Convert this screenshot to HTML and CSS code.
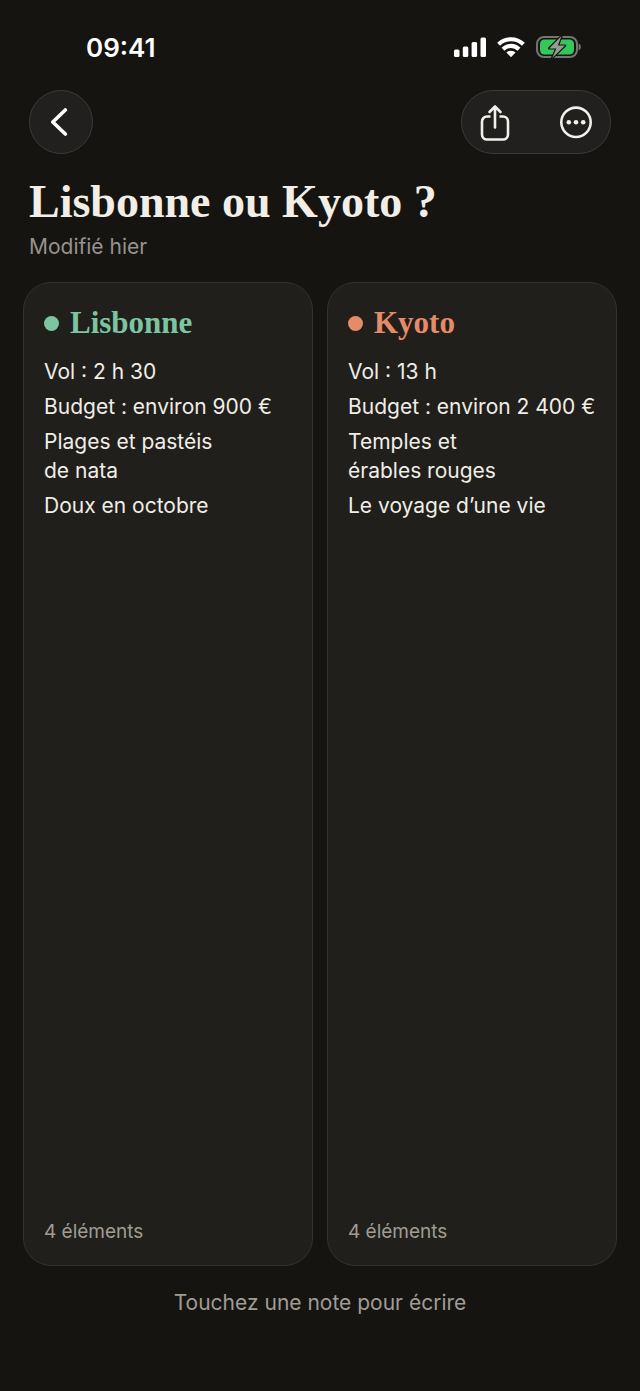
FILE: index.html
```html
<!DOCTYPE html>
<html lang="fr">
<head>
<meta charset="utf-8">
<meta name="viewport" content="width=device-width, initial-scale=1">
<title>Lisbonne ou Kyoto ?</title>
<link rel="stylesheet" href="styles.css">
</head>
<body>
<div class="screen">
  <div class="status">
    <time class="clock">09:41</time>
    <div class="indicators">
      <svg width="32" height="20" viewBox="0 0 32 20" fill="#fff" aria-hidden="true">
        <rect x="0" y="12.5" width="5.5" height="7.5" rx="1.5"/>
        <rect x="8.8" y="9.5" width="5.5" height="10.5" rx="1.5"/>
        <rect x="17.6" y="5" width="5.5" height="15" rx="1.5"/>
        <rect x="26.5" y="0.5" width="5.5" height="19.5" rx="1.5"/>
      </svg>
      <svg width="28" height="20" viewBox="0 0 28 20" fill="none" stroke="#fff" stroke-width="4.2" aria-hidden="true">
        <path d="M1.6 7.3a17.7 17.7 0 0 1 24.8 0"/>
        <path d="M6 12.2a11.5 11.5 0 0 1 16 0"/>
        <path d="M14 20.2l-4.6-4.6a6.4 6.4 0 0 1 9.2 0z" fill="#fff" stroke="none"/>
      </svg>
      <svg width="46" height="24" viewBox="0 0 46 24" aria-hidden="true">
        <rect x="1" y="2" width="40" height="20" rx="7" fill="none" stroke="#747472" stroke-width="2"/>
        <path d="M42.6 8.6c3 1 3 5.8 0 6.8z" fill="#747472"/>
        <rect x="4" y="4.5" width="34" height="15" rx="4.5" fill="#34c759"/>
        <path d="M25.5 1L13.2 13.4h7.2L16.2 23 29 10.6h-7.2z" fill="#999996" stroke="#151411" stroke-width="2.4" stroke-linejoin="round" paint-order="stroke"/>
      </svg>
    </div>
  </div>

  <header class="toolbar">
    <button class="glass back" type="button" aria-label="Retour">
      <svg width="20" height="30" viewBox="0 0 20 30" fill="none" stroke="#fff" stroke-width="3.6" stroke-linecap="round" stroke-linejoin="round" aria-hidden="true"><path d="M14.3 3L1.8 15l12.5 12"/></svg>
    </button>
    <div class="glass actions">
      <button class="action" type="button" aria-label="Partager">
        <svg width="32" height="38" viewBox="0 0 32 38" fill="none" stroke="#f2f0ea" stroke-width="2.6" stroke-linecap="round" stroke-linejoin="round" aria-hidden="true">
          <path d="M11.5 13.5H8a5 5 0 0 0-5 5v13a5 5 0 0 0 5 5h16a5 5 0 0 0 5-5v-13a5 5 0 0 0-5-5h-3.5" stroke-linecap="butt"/>
          <path d="M16 24.5V3.5M10.5 9L16 3.5 21.500 9"/>
        </svg>
      </button>
      <button class="action" type="button" aria-label="Plus d’options">
        <svg width="34" height="34" viewBox="0 0 34 34" fill="#f2f0ea" aria-hidden="true">
          <circle cx="17" cy="17.300" r="14.7" fill="none" stroke="#f2f0ea" stroke-width="2.6"/>
          <circle cx="9.8" cy="17.300" r="2.3"/><circle cx="17" cy="17.300" r="2.3"/><circle cx="24.2" cy="17.300" r="2.3"/>
        </svg>
      </button>
    </div>
  </header>

  <main class="content">
    <div class="heading">
      <h1 class="title">Lisbonne ou Kyoto ?</h1>
      <p class="modified">Modifié hier</p>
    </div>
    <div class="notes">
      <article class="note">
        <h2 class="note-title green">Lisbonne</h2>
        <ul class="items">
          <li>Vol : 2 h 30</li>
          <li>Budget : environ 900&nbsp;€</li>
          <li>Plages et pastéis<br>de nata</li>
          <li>Doux en octobre</li>
        </ul>
        <p class="count">4 éléments</p>
      </article>
      <article class="note">
        <h2 class="note-title orange">Kyoto</h2>
        <ul class="items">
          <li>Vol : 13 h</li>
          <li>Budget : environ 2 400&nbsp;€</li>
          <li>Temples et<br>érables rouges</li>
          <li>Le voyage d’une vie</li>
        </ul>
        <p class="count">4 éléments</p>
      </article>
    </div>
  </main>
  <footer class="hint">Touchez une note pour écrire</footer>
</div>
</body>
</html>
```
FILE: styles.css
```css
* {
  box-sizing: border-box;
}

body {
  margin: 0;
  background: #151411;
  color: #f0eee6;
  font-family: Inter, "Liberation Sans", sans-serif;
  font-size: 21px;
  line-height: 29px;
}

h1, h2, p, ul {
  margin: 0;
  padding: 0;
}

button {
  padding: 0;
  border: 0;
  background: none;
  cursor: pointer;
}

svg {
  display: block;
}

.screen {
  display: flex;
  flex-direction: column;
  min-height: 100vh;
}

.status {
  display: flex;
  align-items: center;
  justify-content: space-between;
  height: 90px;
  padding: 4px 58px 0 86px;
}

.clock {
  color: #fff;
  font-size: 26px;
  font-weight: 600;
}

.indicators {
  display: flex;
  align-items: center;
  gap: 11px;
}

.toolbar {
  display: flex;
  justify-content: space-between;
  padding: 0 29px;
}

.glass {
  display: flex;
  align-items: center;
  height: 64px;
  border: 1px solid #3b3a38;
  border-radius: 32px;
  background: #21201e;
}

.back {
  justify-content: center;
  width: 64px;
}

.actions {
  justify-content: space-between;
  width: 150px;
  padding: 0 17px;
}

.heading {
  padding: 20px 29px 0;
}

.title {
  font-family: "Liberation Serif", serif;
  font-size: 46px;
  font-weight: 700;
  line-height: 56px;
}

.modified {
  margin-top: 2px;
  color: #96938c;
}

.content {
  display: flex;
  flex: 1;
  flex-direction: column;
}

.notes {
  display: grid;
  flex: 1;
  grid-template-columns: 1fr 1fr;
  gap: 14px;
  padding: 21px 23px 0;
}

.note {
  display: flex;
  flex-direction: column;
  padding: 22px 16px 19px 20px;
  border: 1px solid #33322e;
  border-radius: 28px;
  background: #201f1b;
}

.note-title {
  display: flex;
  align-items: center;
  gap: 11px;
  font-family: "Liberation Serif", serif;
  font-size: 31px;
  font-weight: 700;
  line-height: 36px;
}

.note-title::before {
  width: 15px;
  height: 15px;
  border-radius: 50%;
  background: currentColor;
  content: "";
}

.green {
  color: #7cc5a0;
}

.orange {
  color: #e58b67;
}

.items {
  display: flex;
  flex: 1;
  flex-direction: column;
  gap: 6px;
  padding-top: 16px;
  list-style: none;
}

.count {
  color: #a09d95;
  font-size: 19px;
}

.hint {
  padding: 22px 23px 74px;
  color: #a09d95;
  text-align: center;
}
```
